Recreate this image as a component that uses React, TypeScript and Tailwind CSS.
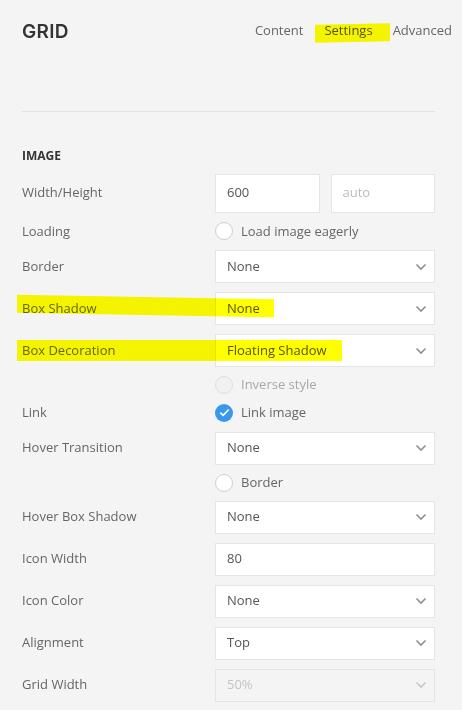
import { ReactNode } from 'react'

const font = { fontFamily: '"Open Sans", "Liberation Sans", sans-serif' }

function Chevron({ disabled }: { disabled?: boolean }) {
  return (
    <svg width="12" height="8" viewBox="0 0 12 8" className="shrink-0">
      <path
        d="M1.5 1.5 L6 6 L10.5 1.5"
        fill="none"
        stroke={disabled ? '#c8c8c8' : '#8f8f8f'}
        strokeWidth="1.6"
      />
    </svg>
  )
}

function Select({ value, disabled }: { value: string; disabled?: boolean }) {
  return (
    <div
      className={`h-[33px] w-full flex items-center justify-between pl-[11px] pr-[7px] border border-[#e5e5e5] text-[13px] ${
        disabled ? 'bg-[#f4f4f4] text-[#c4c4c4]' : 'bg-white text-[#555]'
      }`}
    >
      <span>{value}</span>
      <Chevron disabled={disabled} />
    </div>
  )
}

function Input({ value, placeholder, tall }: { value?: string; placeholder?: string; tall?: boolean }) {
  return (
    <div
      className={`${tall ? 'h-[39px]' : 'h-[33px]'} w-full flex items-center pl-[11px] bg-white border border-[#e5e5e5] text-[13px] ${
        value ? 'text-[#555]' : 'text-[#bbb]'
      }`}
    >
      {value ?? placeholder}
    </div>
  )
}

function Radio({ label, disabled }: { label: string; disabled?: boolean }) {
  return (
    <div className="h-[18px] flex items-center gap-[8px] text-[13px]">
      <span
        className={`w-[18px] h-[18px] rounded-full border ${
          disabled ? 'border-[#dedede] bg-[#f1f1f1]' : 'border-[#cfcfcf] bg-white'
        }`}
      />
      <span className={disabled ? 'text-[#a8a8a8]' : 'text-[#666]'}>{label}</span>
    </div>
  )
}

function Check({ label }: { label: string }) {
  return (
    <div className="h-[18px] flex items-center gap-[8px] text-[13px]">
      <span className="w-[18px] h-[18px] rounded-full bg-[#3a97ee] flex items-center justify-center">
        <svg width="11" height="9" viewBox="0 0 11 9">
          <path d="M1.3 4.6 L4.2 7.3 L9.7 1.5" fill="none" stroke="white" strokeWidth="1.7" />
        </svg>
      </span>
      <span className="text-[#666]">{label}</span>
    </div>
  )
}

function Row({ label, children }: { label?: string; children: ReactNode }) {
  return (
    <div className="flex items-center">
      <div className="w-[193px] text-[13px] text-[#666]">{label}</div>
      <div className="w-[220px]">{children}</div>
    </div>
  )
}

export default function App() {
  return (
    <div className="w-[462px] h-[710px] bg-[#f4f4f4] overflow-hidden relative" style={font}>
      {/* Header */}
      <div className="flex items-center justify-between pl-[22px] pr-[10px] pt-[18px]">
        <h1
          className="text-[19px] font-semibold text-[#333] tracking-[0.3px]"
          style={{ fontFamily: 'Inter, "Open Sans", sans-serif' }}
        >
          GRID
        </h1>
        <nav className="flex items-center gap-[21px] text-[13px] text-[#666] mb-[4px]">
          <span>Content</span>
          <span className="text-[#555]">Settings</span>
          <span className="-ml-[1px]">Advanced</span>
        </nav>
      </div>

      <div className="mx-[22px] mt-[64px] w-[413px] border-t border-[#e1e1e1]" />

      {/* Settings */}
      <div className="pl-[22px] pt-[36px]">
        <div className="text-[12px] font-bold text-[#333] leading-[16px]">IMAGE</div>

        <div className="flex flex-col gap-[9px] mt-[10px]">
          <Row label="Width/Height">
            <div className="flex gap-[11px]">
              <Input value="600" tall />
              <Input placeholder="auto" tall />
            </div>
          </Row>
          <Row label="Loading">
            <Radio label="Load image eagerly" />
          </Row>
          <Row label="Border">
            <Select value="None" />
          </Row>
          <Row label="Box Shadow">
            <Select value="None" />
          </Row>
          <Row label="Box Decoration">
            <Select value="Floating Shadow" />
          </Row>
          <Row>
            <Radio label="Inverse style" disabled />
          </Row>
          <Row label="Link">
            <Check label="Link image" />
          </Row>
          <Row label="Hover Transition">
            <Select value="None" />
          </Row>
          <Row>
            <Radio label="Border" />
          </Row>
          <Row label="Hover Box Shadow">
            <Select value="None" />
          </Row>
          <Row label="Icon Width">
            <Input value="80" />
          </Row>
          <Row label="Icon Color">
            <Select value="None" />
          </Row>
          <Row label="Alignment">
            <Select value="Top" />
          </Row>
          <Row label="Grid Width">
            <Select value="50%" disabled />
          </Row>
        </div>
      </div>

      {/* Marker highlights */}
      <span className="absolute left-[315px] top-[24px] w-[75px] h-[18px] bg-[#ffff00] mix-blend-multiply -skew-y-[1deg]" />
      <span className="absolute left-[17px] top-[297px] w-[257px] h-[18px] bg-[#ffff00] mix-blend-multiply skew-y-[1deg]" />
      <span className="absolute left-[17px] top-[340px] w-[325px] h-[21px] bg-[#ffff00] mix-blend-multiply" />
    </div>
  )
}
